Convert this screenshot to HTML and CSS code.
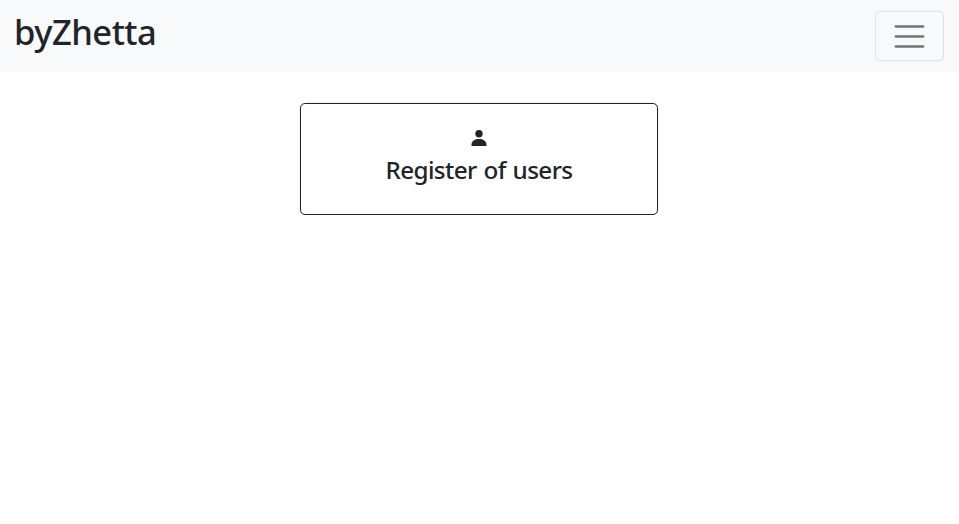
FILE: index.html
```html
<!DOCTYPE html>
<html lang="en">
<head>
<meta charset="utf-8">
<title>byZhetta</title>
<link rel="stylesheet" href="styles.css">
</head>
<body>
<nav class="navbar">
  <a class="brand">byZhetta</a>
  <button class="toggler" aria-label="Toggle navigation">
    <svg class="toggler-icon" viewBox="0 0 30 20"><path stroke="currentColor" stroke-width="2.3" stroke-linecap="round" d="M.7 .5h27.6M.7 10.5h27.6M.7 20.5h27.6"/></svg>
  </button>
</nav>
<main class="content">
  <a class="card">
    <svg class="card-icon" viewBox="0 0 16 16" fill="currentColor"><circle cx="8" cy="3.7" r="3.7"/><path d="M.5 16v-1.5C.5 11 4 9 8 9s7.5 2 7.5 5.5V16z"/></svg>
    <h5 class="card-title">Register of users</h5>
  </a>
</main>
</body>
</html>
```
FILE: styles.css
```css
* { box-sizing: border-box; }
body {
  margin: 0;
  font-family: "Noto Sans", "Open Sans", sans-serif;
  color: #212529;
  background: #fff;
}
.navbar {
  display: flex;
  align-items: flex-start;
  justify-content: space-between;
  height: 72px;
  padding: 11px 15px 0 14px;
  background: #f8f9fa;
}
.brand {
  font-size: 34.5px;
  line-height: 42px;
  font-weight: 500;
  letter-spacing: -.5px;
}
.toggler {
  display: flex;
  align-items: center;
  justify-content: center;
  width: 69px;
  height: 50px;
  padding: 0;
  border: 1px solid #dee0e1;
  border-radius: 5px;
  background: transparent;
  color: #737476;
}
.toggler-icon { width: 30px; height: 20px; overflow: visible; }
.content {
  display: flex;
  justify-content: center;
  padding: 31px 1px 0 0;
}
.card {
  display: flex;
  flex-direction: column;
  align-items: center;
  width: 358px;
  height: 112px;
  padding-top: 26px;
  border: 1px solid #212529;
  border-radius: 5px;
  box-shadow: 0 0 1px rgba(33, 37, 41, .4);
}
.card-icon { width: 16px; height: 16px; }
.card-title {
  margin: 9px 0 0;
  font-size: 24.25px;
  line-height: 30px;
  font-weight: 500;
  letter-spacing: -.62px;
  word-spacing: 1.2px;
}
```
